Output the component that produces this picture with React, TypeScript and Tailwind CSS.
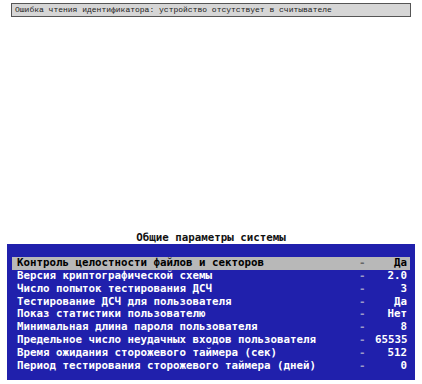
const ROWS: Array<[string, string]> = [
  ["Контроль целостности файлов и секторов", "Да"],
  ["Версия криптографической схемы", "2.0"],
  ["Число попыток тестирования ДСЧ", "3"],
  ["Тестирование ДСЧ для пользователя", "Да"],
  ["Показ статистики пользователю", "Нет"],
  ["Минимальная длина пароля пользователя", "8"],
  ["Предельное число неудачных входов пользователя", "65535"],
  ["Время ожидания сторожевого таймера (сек)", "512"],
  ["Период тестирования сторожевого таймера (дней)", "0"],
];

export default function App() {
  return (
    <div className="flex h-[384px] w-[422px] flex-col bg-white">
      <div className="mx-[11px] mt-[3px] flex h-[14px] items-center border border-[#555] bg-[#d6d6d6] pl-[3px] font-['Liberation_Mono',monospace] text-[8px] text-[#222]">
        Ошибка чтения идентификатора: устройство отсутствует в считывателе
      </div>

      <div className="mt-auto text-center font-['DejaVu_Sans_Mono',monospace] text-[10.8px] font-bold leading-[13px] text-[#111]">
        Общие параметры системы
      </div>

      <div className="mx-[7px] mb-[4px] flex flex-col bg-[#2020ac] pt-[13px] pb-[8px] font-['DejaVu_Sans_Mono',monospace] text-[10.8px] font-bold">
        {ROWS.map(([label, value], i) => {
          const sel = i === 0;
          return (
            <div
              key={label}
              className={
                sel
                  ? "mx-[5px] flex h-[12.8px] items-center bg-[#b8b8b8] pl-[5px] pr-[3px] text-black"
                  : "mx-[5px] flex h-[12.8px] items-center pl-[5px] pr-[3px] text-white"
              }
            >
              <span className="flex-1 whitespace-pre">{label}</span>
              <span className={sel ? "w-[16px] text-[#666]" : "w-[16px] text-[#9a9ac8]"}>-</span>
              <span className="w-[32px] text-right">{value}</span>
            </div>
          );
        })}
      </div>
    </div>
  );
}
